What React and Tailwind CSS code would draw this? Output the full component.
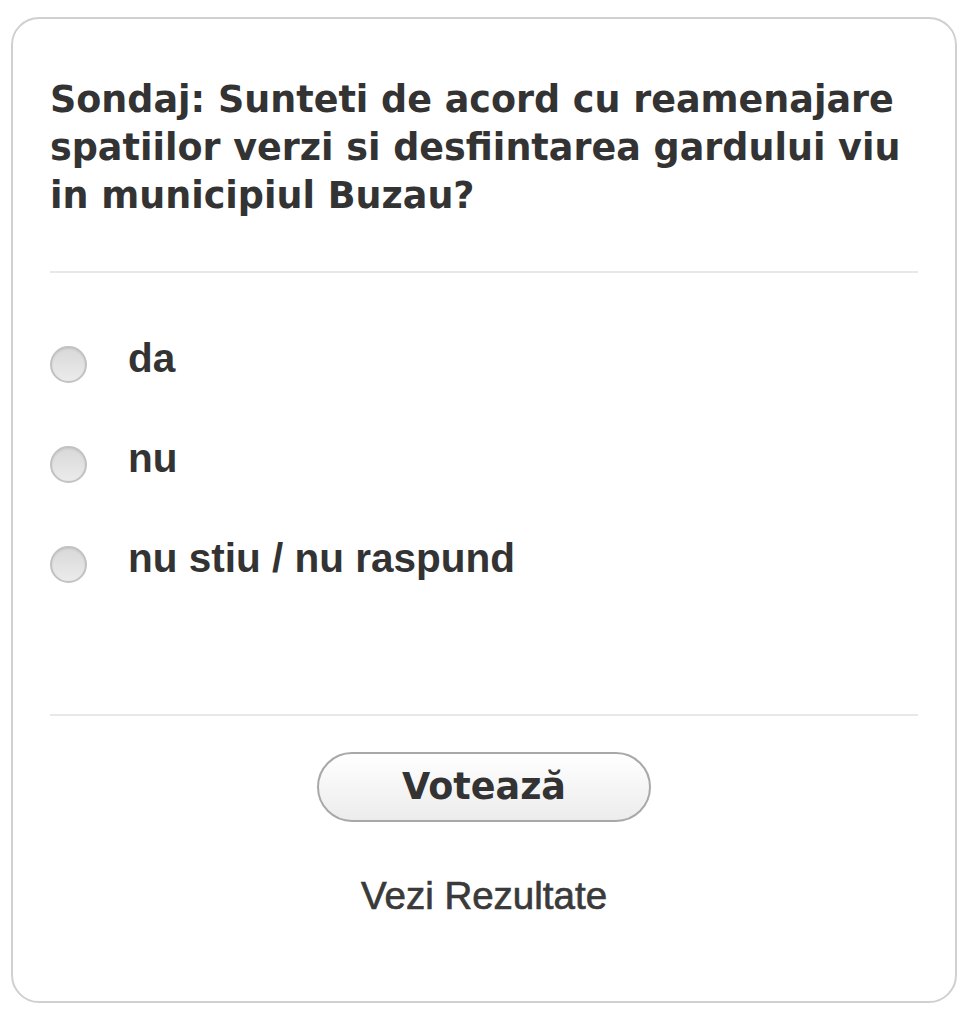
import React from "react";

const options = ["da", "nu", "nu stiu / nu raspund"];

export default function App() {
  return (
    <div className="min-h-screen w-full bg-white pt-[17px] pl-[11px]">
      <div className="flex h-[986px] w-[946px] flex-col rounded-[28px] border-2 border-[#d0d0d0] bg-white px-[37px] pt-[57px]">
        <h1
          className="text-[36.5px] font-bold leading-[48px] text-[#333]"
          style={{ fontFamily: '"DejaVu Sans", Verdana, sans-serif' }}
        >
          Sondaj: Sunteti de acord cu reamenajare spatiilor verzi si desfiintarea gardului viu in municipiul Buzau?
        </h1>
        <div className="mt-[51px] h-[2px] w-full bg-[#e8e8e8]" />
        <div className="mt-[41px] flex flex-col">
          {options.map((o) => (
            <div key={o} className="flex h-[100px] items-center">
              <div className="h-[37px] w-[37px] shrink-0 rounded-full border-2 border-[#c2c2c2] bg-linear-to-b from-[#d9d9d9] to-[#ebebeb] shadow-[inset_0_1px_2px_rgba(0,0,0,0.08)]" />
              <span
                className="mb-3 ml-[41px] text-[40.5px] font-bold text-[#333]"
                style={{ fontFamily: '"Liberation Sans", Arial, sans-serif' }}
              >
                {o}
              </span>
            </div>
          ))}
        </div>
        <div className="mt-[100px] h-[2px] w-full bg-[#e8e8e8]" />
        <div className="mt-[36px] flex justify-center">
          <button
            className="flex h-[70px] w-[334px] items-center justify-center rounded-full border-2 border-[#a8a8a8] bg-linear-to-b from-white to-[#ececec] text-[36.5px] font-bold text-[#333]"
            style={{ fontFamily: '"DejaVu Sans", Verdana, sans-serif' }}
          >
            Votează
          </button>
        </div>
        <div className="mt-[45px] flex justify-center">
          <span
            className="text-[38.5px] text-[#3a3a3a] [-webkit-text-stroke:0.7px_#3a3a3a]"
            style={{ fontFamily: '"Liberation Sans", Arial, sans-serif' }}
          >
            Vezi Rezultate
          </span>
        </div>
      </div>
    </div>
  );
}
